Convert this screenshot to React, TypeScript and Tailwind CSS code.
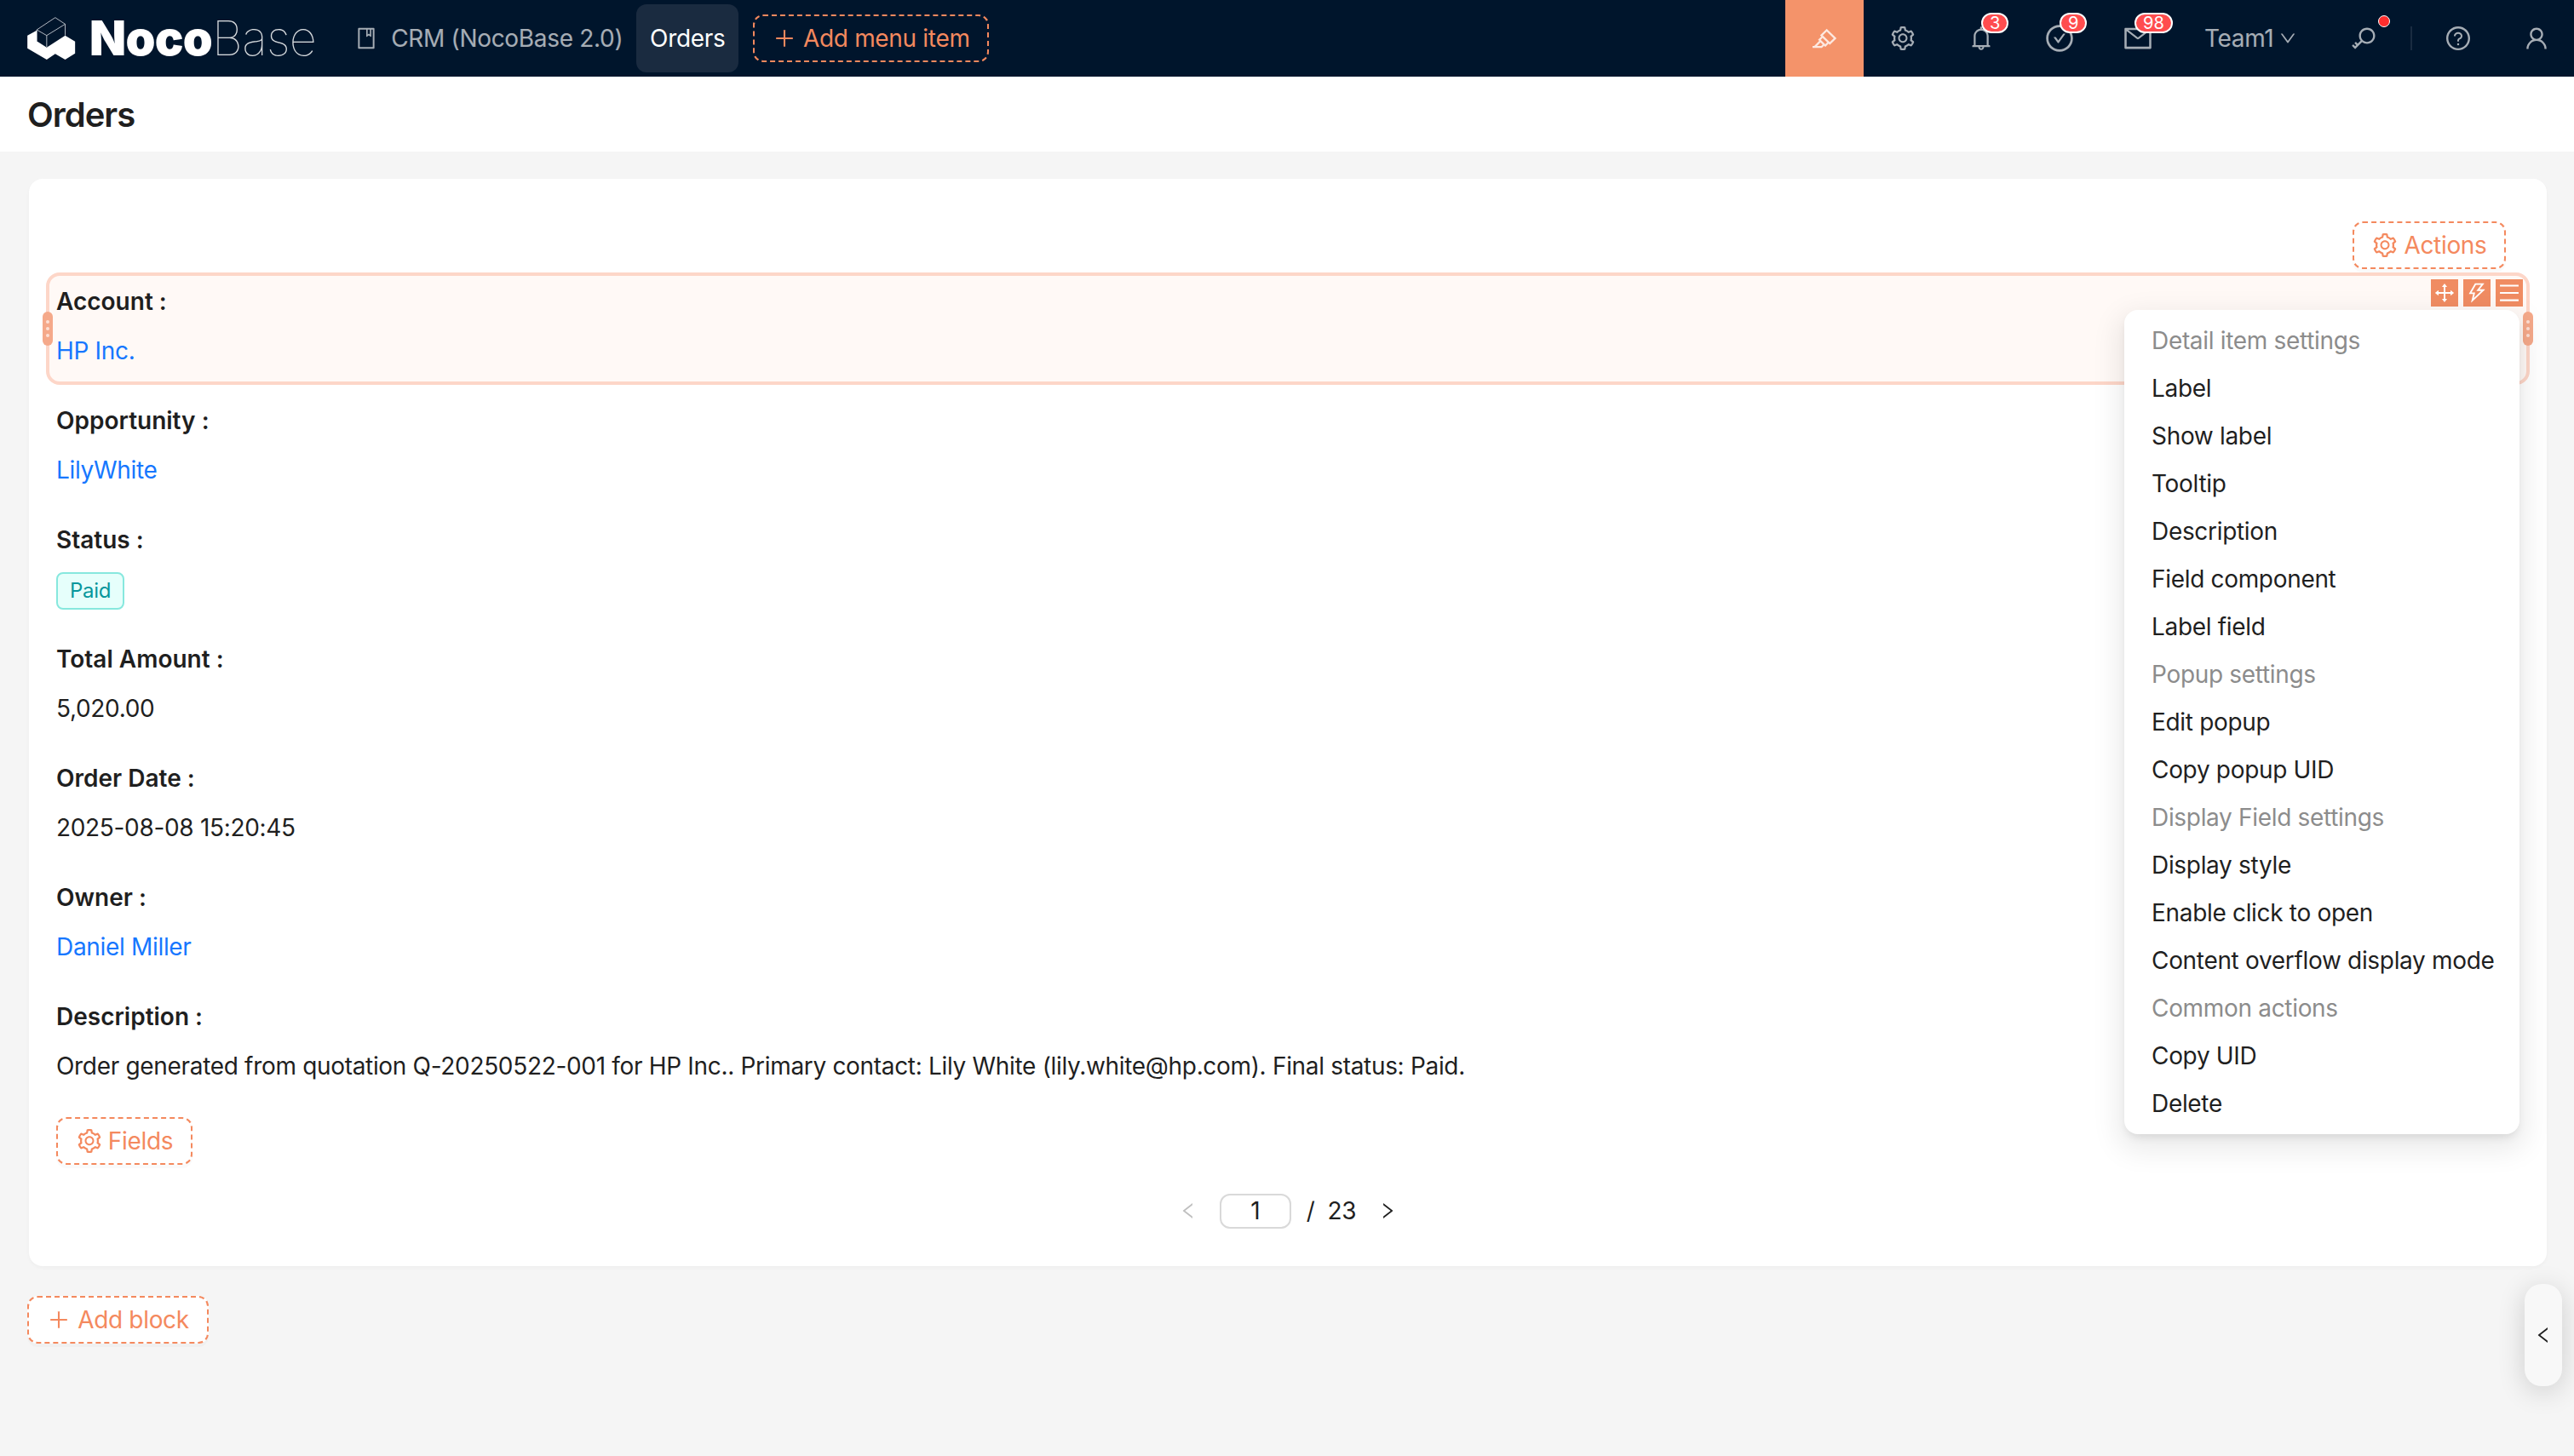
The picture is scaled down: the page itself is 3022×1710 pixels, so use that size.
import React from "react";
import {
  AiOutlineBook, AiOutlinePlus, AiOutlineHighlight, AiOutlineSetting, AiOutlineBell, AiOutlineCheckCircle,
  AiOutlineMail, AiOutlineDown, AiOutlineKey, AiOutlineQuestionCircle, AiOutlineUser, AiOutlineDrag,
  AiOutlineThunderbolt, AiOutlineMenu, AiOutlineLeft, AiOutlineRight,
} from "react-icons/ai";

const F = "font-['Inter','Liberation_Sans',sans-serif]";

function Logo() {
  return (
    <svg width="57" height="50" viewBox="37 40 170 150" className="shrink-0">
      <path d="M135 42 L170 65 L170 105 M170 65 L105 105 L70 85 L135 42 M105 105 L105 145 M70 85 L70 125" fill="none" stroke="#d5d9de" strokeWidth="2.5" />
      <path d="M37 105 L70 87 L70 125 L105 147 L170 105 L205 126 L205 168 L170 190 L135 170 L105 190 L37 150 Z" fill="#fff" />
    </svg>
  );
}

function IconBtn({ children, badge, badgeClass = "left-1/2" }: { children: React.ReactNode; badge?: string; badgeClass?: string }) {
  return (
    <div className="w-[92px] h-[90px] flex items-center justify-center text-white/65">
      <div className="relative w-[32px] h-[32px] flex items-center justify-center">
        {children}
        {badge && (
          <span className={`absolute -top-[14px] ${badgeClass} px-[8px] h-[24px] rounded-full bg-[#ff4d4f] border-2 border-white text-white text-[20px] tracking-normal leading-[20px] flex items-center`}>
            {badge}
          </span>
        )}
      </div>
    </div>
  );
}

function DashedBtn({ icon, label, className = "" }: { icon: React.ReactNode; label: string; className?: string }) {
  return (
    <div className={`h-[56px] inline-flex items-center justify-center rounded-[12px] border-2 border-dashed border-[#f4895e] bg-white text-[#f4895e] text-[28px] shadow-[0_4px_0_rgba(0,0,0,0.02)] ${className}`}>
      {icon}
      {label}
    </div>
  );
}

function Handle({ className }: { className: string }) {
  return (
    <div className={`absolute top-[42px] w-[12px] h-[40px] rounded-full bg-[#f5a98a] flex flex-col items-center justify-center gap-[4px] ${className}`}>
      <i className="w-[4px] h-[4px] rounded-full bg-[#fde0d5]" />
      <i className="w-[4px] h-[4px] rounded-full bg-[#fde0d5]" />
      <i className="w-[4px] h-[4px] rounded-full bg-[#fde0d5]" />
    </div>
  );
}

function Row({ label, children, hot }: { label: string; children: React.ReactNode; hot?: boolean }) {
  return (
    <div className={`relative h-[132px] mb-[8px] rounded-[16px] px-[8px] pt-[8px] border-[4px] ${hot ? "border-[#fdd6c8] bg-[#fff9f6]" : "border-transparent"}`}>
      <div className="h-[44px] leading-[44px] text-[28px] tracking-normal font-semibold text-[#1f1f1f]">{label} :</div>
      <div className="mt-[14px] h-[44px] leading-[44px] text-[28px] text-[#1f1f1f]">{children}</div>
      {hot && (
        <>
          <Handle className="-left-[8px]" />
          <Handle className="-right-[8px]" />
          <div className="absolute top-[4px] right-[4px] flex gap-[6px]">
            {[<AiOutlineDrag />, <AiOutlineThunderbolt />, <AiOutlineMenu />].map((ic, i) => (
              <span key={i} className="w-[32px] h-[32px] bg-[#f08c62] text-white text-[28px] flex items-center justify-center">{ic}</span>
            ))}
          </div>
        </>
      )}
    </div>
  );
}

const menu: [string, boolean?][] = [
  ["Detail item settings", true], ["Label"], ["Show label"], ["Tooltip"], ["Description"], ["Field component"], ["Label field"],
  ["Popup settings", true], ["Edit popup"], ["Copy popup UID"], ["Display Field settings", true], ["Display style"],
  ["Enable click to open"], ["Content overflow display mode"], ["Common actions", true], ["Copy UID"], ["Delete"],
];

export default function App() {
  const link = "text-[#1677ff]";
  return (
    <div className={`${F} relative w-[3022px] h-[1710px] overflow-hidden bg-[#f5f5f5] text-[28px] tracking-[-0.32px] text-[#1f1f1f]`}>
      <header className="h-[90px] bg-[#00152c] flex items-center">
        <div className="w-[32px]" />
        <Logo />
        <div className="ml-[16px] flex items-baseline text-white text-[56px] leading-[56px] tracking-[-0.7px]">
          <span className="font-black">Noco</span>
          <span className="font-thin text-white/85">Base</span>
        </div>
        <div className="ml-[45px] flex items-center gap-[15px] text-white/65">
          <AiOutlineBook className="text-[28px]" />
          <span>CRM (NocoBase 2.0)</span>
        </div>
        <div className="ml-[16px] w-[120px] h-[80px] rounded-[12px] bg-[#1a2b40] text-white flex items-center justify-center">Orders</div>
        <div className="ml-[17px] w-[277px] h-[56px] rounded-[12px] border-2 border-dashed border-[#f4895e] text-[#f4895e] flex items-center justify-center gap-[8px]">
          <AiOutlinePlus className="text-[28px]" />
          Add menu item
        </div>
        <div className="ml-auto -mr-[2px] flex items-center">
          <div className="w-[92px] h-[90px] bg-[#f4936a] flex items-center justify-center text-[32px] text-white/80"><AiOutlineHighlight /></div>
          <IconBtn><AiOutlineSetting className="text-[32px] shrink-0" /></IconBtn>
          <IconBtn badge="3"><AiOutlineBell className="text-[32px] shrink-0" /></IconBtn>
          <IconBtn badge="9"><AiOutlineCheckCircle className="text-[36px] shrink-0" /></IconBtn>
          <IconBtn badge="98" badgeClass="left-[12px]"><AiOutlineMail className="text-[36px] shrink-0" /></IconBtn>
          <div className="ml-[32px] w-[158px] text-white/65 flex items-center gap-[6px]">Team1 <AiOutlineDown className="text-[22px]" /></div>
          <div className="relative w-[60px] flex justify-center text-[32px] text-white/65">
            <AiOutlineKey />
            <span className="absolute -top-[11px] right-0 w-[14px] h-[14px] rounded-full bg-[#ff2d2d] border border-white" />
          </div>
          <div className="ml-[24px] w-[2px] h-[28px] bg-white/10" />
          <div className="ml-[8px]"><IconBtn><AiOutlineQuestionCircle className="text-[32px] shrink-0" /></IconBtn></div>
          <IconBtn><AiOutlineUser className="text-[32px] shrink-0" /></IconBtn>
        </div>
      </header>
      <div className="h-[88px] bg-white flex items-center px-[32px] pt-[2px] text-[40px] tracking-[-1px] font-semibold">Orders</div>
      <main className="px-[32px] pt-[32px]">
        <section className="ml-[2px] h-[1277px] w-[2956px] rounded-[16px] bg-white shadow-[0_2px_4px_rgba(0,0,0,0.03)] pt-[50px] px-[20px]">
          <div className="h-[60px] flex justify-end pr-[28px]">
            <DashedBtn className="w-[180px] gap-[6px]" icon={<AiOutlineSetting className="text-[32px]" />} label="Actions" />
          </div>
          <Row label="Account" hot><span className={link}>HP Inc.</span></Row>
          <Row label="Opportunity"><span className={link}>LilyWhite</span></Row>
          <Row label="Status">
            <span className="inline-flex h-[44px] items-center px-[14px] rounded-[8px] border-2 border-[#87e8de] bg-[#e6fffb] text-[#08979c] text-[24px]">Paid</span>
          </Row>
          <Row label="Total Amount">5,020.00</Row>
          <Row label="Order Date">2025-08-08 15:20:45</Row>
          <Row label="Owner"><span className={link}>Daniel Miller</span></Row>
          <Row label="Description">Order generated from quotation Q-20250522-001 for HP Inc.. Primary contact: Lily White (lily.white@hp.com). Final status: Paid.</Row>
          <div className="pl-[12px] mt-[20px]">
            <DashedBtn className="w-[160px] gap-[6px]" icon={<AiOutlineSetting className="text-[32px]" />} label="Fields" />
          </div>
          <div className="mt-[33px] flex items-center justify-center h-[42px] text-[28px]">
            <AiOutlineLeft className="text-[24px] text-[#bfbfbf]" />
            <div className="ml-[25px] w-[84px] h-[41px] rounded-[12px] border-2 border-[#d9d9d9] flex items-center justify-center">1</div>
            <span className="ml-[18px]">/</span>
            <span className="ml-[15px]">23</span>
            <AiOutlineRight className="ml-[25px] text-[24px]" />
          </div>
        </section>
        <div className="mt-[35px]">
          <DashedBtn className="w-[213px] gap-[8px]" icon={<AiOutlinePlus className="text-[28px]" />} label="Add block" />
        </div>
      </main>
      <div className="absolute left-[2494px] top-[364px] w-[464px] py-[8px] rounded-[16px] bg-white shadow-[0_12px_32px_8px_rgba(0,0,0,0.08),0_6px_12px_-4px_rgba(0,0,0,0.12)]">
        {menu.map(([t, g]) => (
          <div key={t} className={`h-[56px] px-[32px] flex items-center whitespace-nowrap ${g ? "text-[#8c8c8c]" : ""}`}>{t}</div>
        ))}
      </div>
      <div className="absolute left-[2964px] top-[1508px] w-[44px] h-[120px] rounded-[20px] bg-[#f8f8f8] shadow-[0_6px_32px_rgba(0,0,0,0.16)] flex items-center justify-center text-[24px]">
        <AiOutlineLeft />
      </div>
    </div>
  );
}
